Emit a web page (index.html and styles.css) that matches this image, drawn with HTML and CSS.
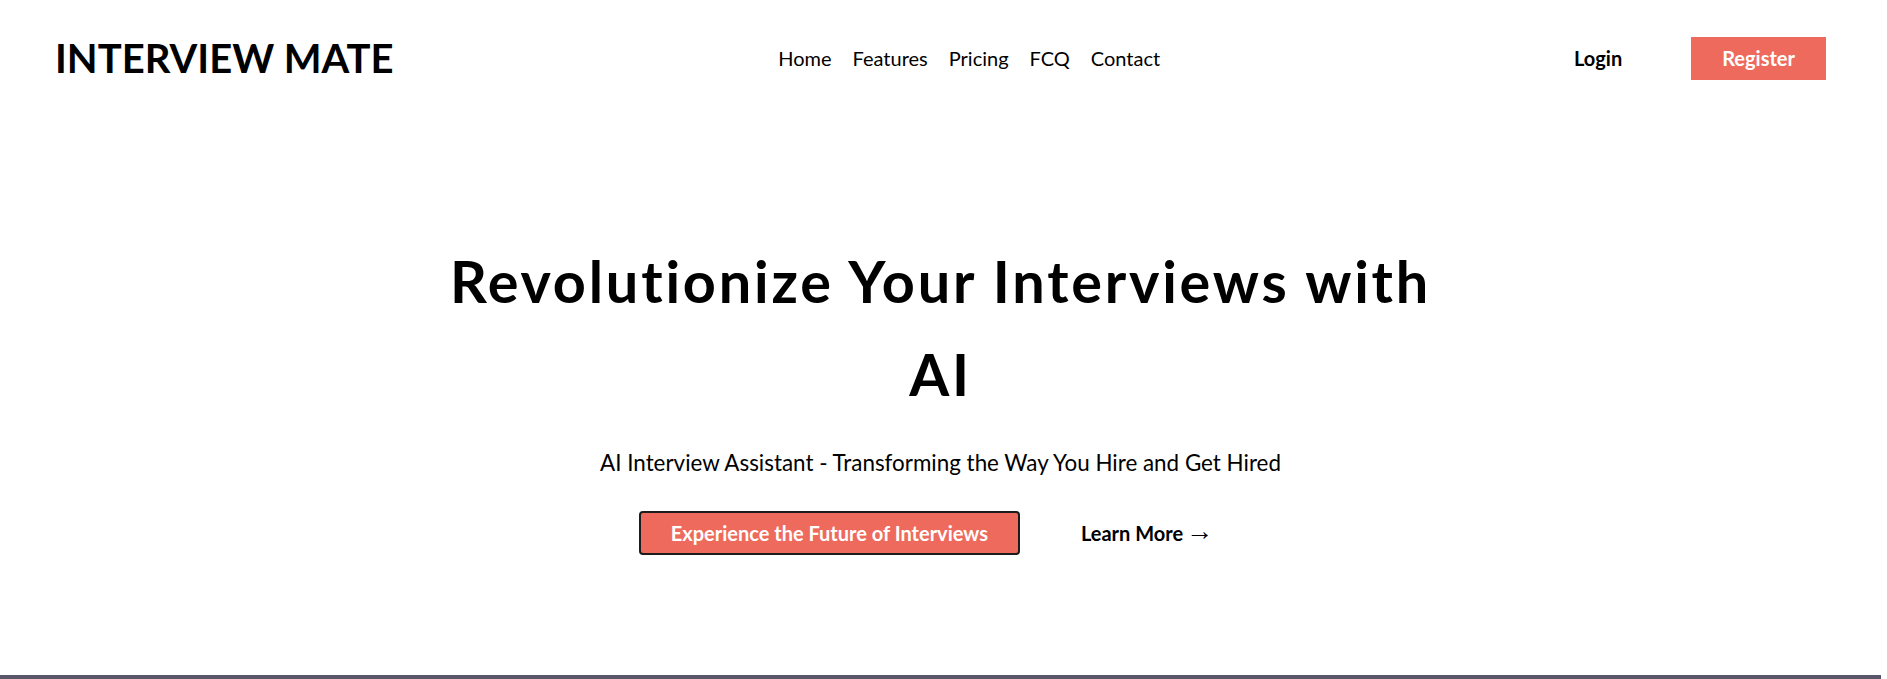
FILE: index.html
```html
<!DOCTYPE html>
<html lang="en">
<head>
<meta charset="utf-8">
<title>Interview Mate</title>
<link rel="stylesheet" href="styles.css">
</head>
<body>
<div class="page">
  <header class="header">
    <div class="logo">INTERVIEW MATE</div>
    <nav class="nav">
      <a href="#">Home</a>
      <a href="#">Features</a>
      <a href="#">Pricing</a>
      <a href="#">FCQ</a>
      <a href="#">Contact</a>
    </nav>
    <div class="auth">
      <a class="login" href="#">Login</a>
      <a class="register" href="#">Register</a>
    </div>
  </header>
  <section class="hero">
    <h1 class="title">Revolutionize Your Interviews with AI</h1>
    <p class="subtitle">AI Interview Assistant - Transforming the Way You Hire and Get Hired</p>
    <div class="actions">
      <a class="cta" href="#">Experience the Future of Interviews</a>
      <a class="more" href="#">Learn More<span class="arrow">&rarr;</span></a>
    </div>
  </section>
  <section class="next"></section>
</div>
</body>
</html>
```

FILE: styles.css
```css
html, body {
  margin: 0;
  padding: 0;
  background: #ffffff;
}
body {
  font-family: Lato, "Liberation Sans", sans-serif;
  color: #000;
  overflow: hidden;
}
.page {
  margin-right: 6px;
}
a {
  color: #000;
  text-decoration: none;
}
.header {
  display: flex;
  justify-content: space-between;
  align-items: center;
  padding: 37px 55px 0 55px;
  height: 43px;
}
.logo {
  font-size: 40px;
  font-weight: 700;
  line-height: 43px;
}
.nav {
  display: flex;
  gap: 21px;
  font-size: 20px;
  margin-top: -2px;
}
.auth {
  display: flex;
  align-items: center;
  gap: 40px;
}
.login {
  font-weight: 700;
  font-size: 20px;
  padding: 0 29px;
  margin-top: -2px;
}
.register {
  display: block;
  background: #ee6a5c;
  color: #fff;
  font-weight: 700;
  font-size: 20px;
  line-height: 43px;
  height: 43px;
  padding: 0 31px;
}
.hero {
  text-align: center;
  padding-top: 154px;
  height: 441px;
}
.title {
  margin: 0 auto;
  max-width: 1010px;
  font-size: 57.6px;
  line-height: 93px;
  font-weight: 700;
  letter-spacing: 2.8px;
}
.subtitle {
  margin: 30px 0 0;
  font-size: 22.4px;
  line-height: 25px;
}
.actions {
  margin-top: 36px;
  display: flex;
  justify-content: center;
  align-items: center;
  gap: 32px;
}
.cta {
  display: block;
  box-sizing: border-box;
  width: 381px;
  height: 44px;
  line-height: 40px;
  background: #ee6a5c;
  color: #fff;
  border: 2px solid #1c1c1c;
  border-radius: 4px;
  font-weight: 700;
  font-size: 20px;
}
.more {
  font-weight: 700;
  font-size: 20px;
  padding: 0 29px;
}
.arrow {
  font-family: "Liberation Serif", serif;
  font-weight: 400;
  font-size: 27px;
  line-height: 0;
  margin-left: 3px;
  position: relative;
  top: -1px;
}
.next {
  height: 40px;
  background: #59566a;
}
```
